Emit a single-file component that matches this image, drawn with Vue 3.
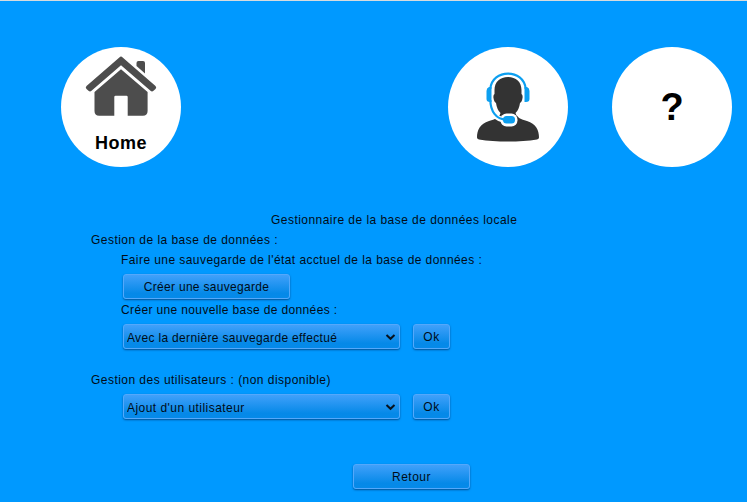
<script setup>
const restoreOptions = ['Avec la dernière sauvegarde effectué']
const userOptions = ["Ajout d'un utilisateur"]
</script>

<template>
  <div class="page">
    <header class="top">
      <a class="circle home">
        <svg class="house" width="72" height="62" viewBox="0 0 72 62">
          <path d="M51.500 7Q51.500 5 53.500 5H58Q60 5 60 7V17.500L51.500 10Z" />
          <path d="M36.800 .8 70.500 30Q72 31.500 70.500 33L68.500 34.800Q67 36 65.500 34.800L36 9.200 6.500 34.800Q5 36 3.500 34.800L1.500 33Q0 31.500 1.500 30L35.200 .8Q36 .1 36.800 .8Z" />
          <path d="M36 13.200 62.600 36V55Q62.600 59.800 57.800 59.800H42.700V41Q42.700 39.800 41.500 39.800H30.500Q29.300 39.800 29.300 41V59.800H14.200Q9.500 59.800 9.500 55V36Z" />
        </svg>
        <span class="home-label">Home</span>
      </a>
      <a class="circle support">
        <svg width="120" height="120" viewBox="0 0 120 120">
          <path fill="#333" d="M60 30C68 30 73.500 35 73.500 43V47Q75 48 74.500 51Q74 55 72 56Q71 63 67.500 66Q68 71 79 74C88 77 91 83 91 90.500Q91 92 89 92.500Q76 94.500 60 94.500T31 92.500Q29 92 29 90.500C29 83 32 77 41 74Q52 71 52.500 66Q49 63 48 56Q46 55 45.500 51Q45 48 46.500 47V43C46.500 35 52 30 60 30Z" />
          <path fill="none" stroke="#fff" stroke-width="5.500" d="M42 54C42.500 65 48 73 58 73" />
          <rect x="52.500" y="66.500" width="17" height="13" rx="6" fill="#fff" />
          <path fill="none" stroke="#0c9ff0" stroke-width="2.200" d="M42.300 42C44 21.500 76 21.500 77.700 42M42.300 53C42.500 64 48 72.500 58 72.500" />
          <path fill="#0c9ff0" d="M43.500 40V55H42Q38.500 55 38.500 52V44Q38.500 41 41 40ZM76.500 40V55H78Q81.500 55 81.500 52V44Q81.500 41 79 40Z" />
          <rect x="55" y="69" width="12" height="7.500" rx="3.500" fill="#0c9ff0" />
        </svg>
      </a>
      <a class="circle help">?</a>
    </header>
    <main>
      <h1>Gestionnaire de la base de données locale</h1>
      <p>Gestion de la base de données :</p>
      <p class="indent">Faire une sauvegarde de l'état acctuel de la base de données :</p>
      <div class="row"><button class="btn save"><span>Créer une sauvegarde</span></button></div>
      <p class="indent create">Créer une nouvelle base de données :</p>
      <div class="row">
        <button v-for="o in restoreOptions" :key="o" class="btn combo restore">
          <span>{{ o }}</span>
          <svg width="11" height="8" viewBox="0 0 11 8"><path d="M1.500 2 5.500 5.800 9.500 2" /></svg>
        </button>
        <button class="btn ok"><span>Ok</span></button>
      </div>
      <p class="section">Gestion des utilisateurs : (non disponible)</p>
      <div class="row">
        <button v-for="o in userOptions" :key="o" class="btn combo">
          <span>{{ o }}</span>
          <svg width="11" height="8" viewBox="0 0 11 8"><path d="M1.500 2 5.500 5.800 9.500 2" /></svg>
        </button>
        <button class="btn ok"><span>Ok</span></button>
      </div>
      <div class="row back"><button class="btn return"><span>Retour</span></button></div>
    </main>
  </div>
</template>

<style>
body { margin: 0; background: #0099ff; }
</style>

<style scoped>
.page {
  box-sizing: border-box;
  width: 747px;
  height: 502px;
  overflow: hidden;
  border-top: 1px solid #d6dbde;
  background: #0099ff;
  color: #000c18;
  font: 12px/20px "Liberation Sans", Arial, sans-serif;
  letter-spacing: 0.46px;
}
.top { display: flex; padding: 46px 15px 0 61px; }
.circle {
  width: 120px;
  height: 120px;
  border-radius: 50%;
  background: #fff;
  color: #000;
  font-weight: bold;
  letter-spacing: 0;
}
.home { display: flex; flex-direction: column; align-items: center; }
.house { margin-top: 9px; fill: #4d4d4d; }
.home-label { margin-top: 14px; font-size: 18px; line-height: 22px; letter-spacing: 0.5px; }
.support { margin-left: 267px; }
.support svg { display: block; }
.help { margin-left: 44px; font-size: 38px; line-height: 120px; text-align: center; }
main { padding: 43px 0 0 91px; }
h1, p {
  margin: 0;
  font-size: 12px;
  font-weight: normal;
  height: 20px;
  white-space: nowrap;
  transform: scaleY(1.14);
  transform-origin: 0 17px;
}
h1 { padding-left: 180px; }
.indent { padding-left: 30px; letter-spacing: 0.43px; }
.create { letter-spacing: 0.36px; }
.row { display: flex; gap: 13px; height: 26px; padding: 4px 0 0 32px; }
.btn {
  box-sizing: border-box;
  height: 25px;
  padding: 0;
  border: 1px solid #54a8fb;
  border-radius: 3px;
  background: linear-gradient(#40a0fa, #0589e8 80%, #058ae9);
  box-shadow: 0 1px 2px rgba(0, 40, 90, 0.65);
  color: #000c18;
  font: 12px/23px "Liberation Sans", Arial, sans-serif;
  letter-spacing: 0.46px;
  white-space: nowrap;
}
.btn span { display: block; transform: scaleY(1.14); transform-origin: 0 10px; }
.save { width: 167px; letter-spacing: 0.3px; }
.combo {
  display: flex;
  align-items: center;
  justify-content: space-between;
  width: 277px;
  padding: 1px 3px 0 3px;
}
.restore { letter-spacing: 0.33px; }
.combo path { fill: none; stroke: #08121e; stroke-width: 2; }
.ok { width: 37px; }
.section { margin-top: 20px; letter-spacing: 0.46px; }
.back { margin-top: 40px; padding-left: 262px; }
.return { width: 117px; }
</style>
